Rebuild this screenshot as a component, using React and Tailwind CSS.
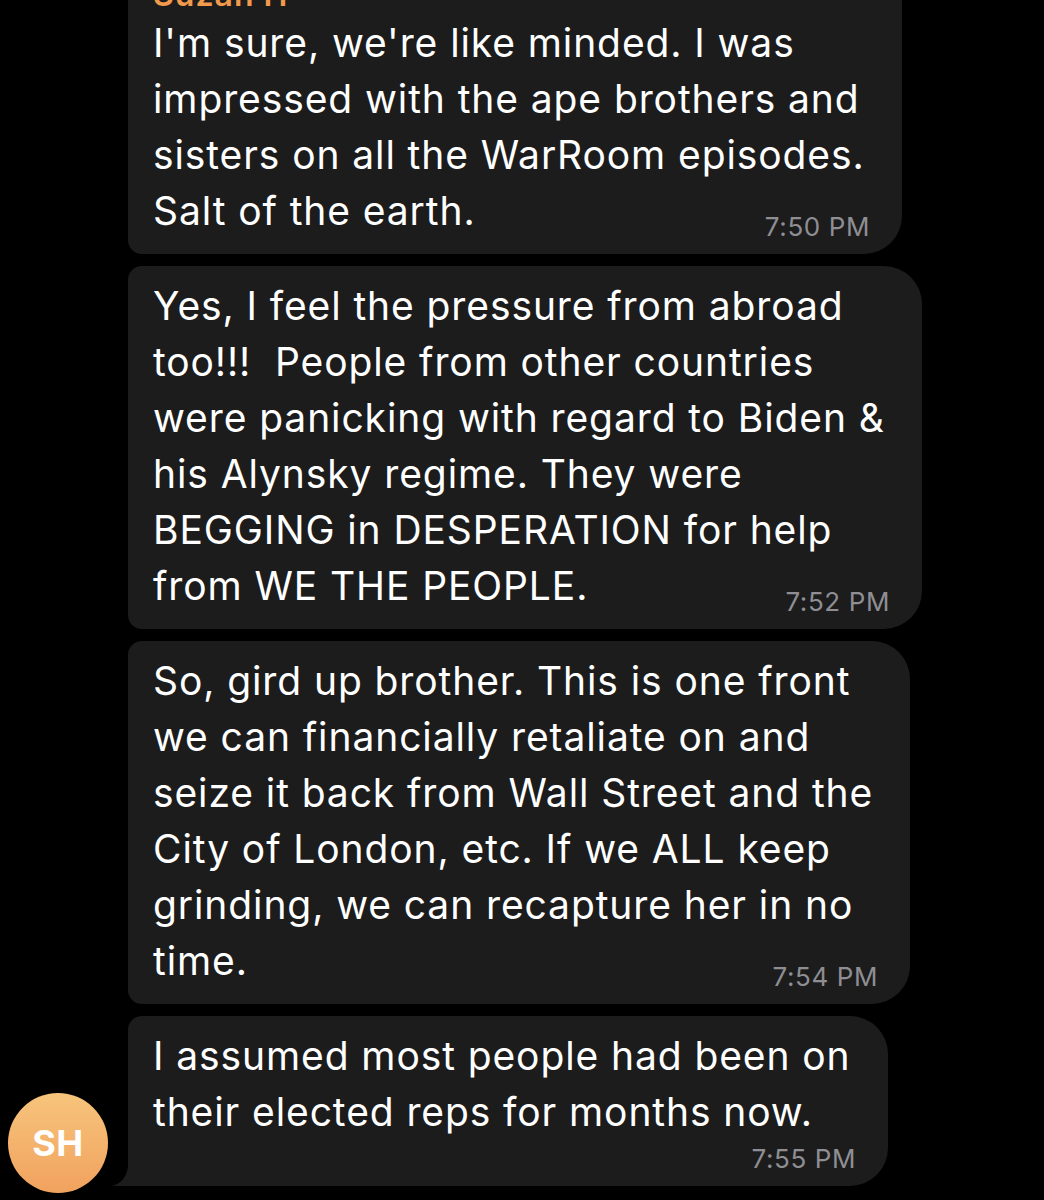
import React from "react";

// ------------------------------
// Chat data
// ------------------------------
const MESSAGES = [
  {
    name: "Suzan H",
    width: "w-[774px]",
    time: "7:50 PM",
    inline: true,
    lines: [
      "I'm sure, we're like minded. I was",
      "impressed with the ape brothers and",
      "sisters on all the WarRoom episodes.",
      "Salt of the earth.",
    ],
  },
  {
    width: "w-[794px]",
    time: "7:52 PM",
    inline: true,
    lines: [
      "Yes, I feel the pressure from abroad",
      "too!!!  People from other countries",
      "were panicking with regard to Biden &",
      "his Alynsky regime. They were",
      "BEGGING in DESPERATION for help",
      "from WE THE PEOPLE.",
    ],
  },
  {
    width: "w-[782px]",
    time: "7:54 PM",
    inline: true,
    lines: [
      "So, gird up brother. This is one front",
      "we can financially retaliate on and",
      "seize it back from Wall Street and the",
      "City of London, etc. If we ALL keep",
      "grinding, we can recapture her in no",
      "time.",
    ],
  },
  {
    width: "w-[760px]",
    time: "7:55 PM",
    inline: false,
    last: true,
    lines: [
      "I assumed most people had been on",
      "their elected reps for months now.",
    ],
  },
];

// ------------------------------
// Bubble
// ------------------------------
const Bubble = ({ name, width, time, inline, last, lines }) => (
  <div
    className={`relative ${width} bg-[#1c1c1d] pl-[25px] pr-[32px] pt-[12px] pb-[12px] rounded-tl-[14px] rounded-tr-[38px] rounded-br-[38px] ${
      last ? "rounded-bl-none" : "rounded-bl-[14px]"
    }`}
  >
    {name && (
      <div className="h-[40px] leading-[40px] text-[32px] font-semibold text-[#f19a4c] tracking-[1px]">
        {name}
      </div>
    )}
    <div className="text-[39px] leading-[56px] text-white tracking-[0.9px]">
      {lines.map((l) => (
        <div key={l} className="whitespace-pre">
          {l}
        </div>
      ))}
    </div>
    <div
      className={`h-[30px] leading-[30px] text-right text-[26px] text-[#8e8e93] tracking-[0.6px] ${
        inline ? "-mt-[27px]" : "mt-[4px]"
      }`}
    >
      {time}
    </div>

    {last && (
      <svg
        className="absolute left-[-16px] bottom-0"
        width="20"
        height="40"
        viewBox="0 0 20 40"
      >
        <path
          d="M16 0 L20 0 L20 40 L0 40 C8 38 15 32 16 20 Z"
          fill="#1c1c1d"
        />
      </svg>
    )}
  </div>
);

// ------------------------------
// Main
// ------------------------------
export default function App() {
  return (
    <div
      className="w-[1044px] h-[1200px] overflow-hidden bg-black"
      style={{ fontFamily: 'Inter, "Noto Sans", "Liberation Sans", sans-serif' }}
    >
      <div className="flex gap-[20px] mt-[-37px]">
        {/* avatar column */}
        <div className="w-[128px] shrink-0 flex flex-col justify-end pl-[8px] pb-[8px]">
          <div className="w-[100px] h-[100px] rounded-full bg-gradient-to-b from-[#f7c47c] to-[#f0a25e] flex items-center justify-center">
            <span className="text-white text-[36px] font-bold tracking-[0.5px]">
              SH
            </span>
          </div>
        </div>
        <div className="flex flex-col gap-[12px] ml-[-20px] pb-[15px]">
          {MESSAGES.map((m) => (
            <Bubble key={m.time} {...m} />
          ))}
        </div>
      </div>
    </div>
  );
}
